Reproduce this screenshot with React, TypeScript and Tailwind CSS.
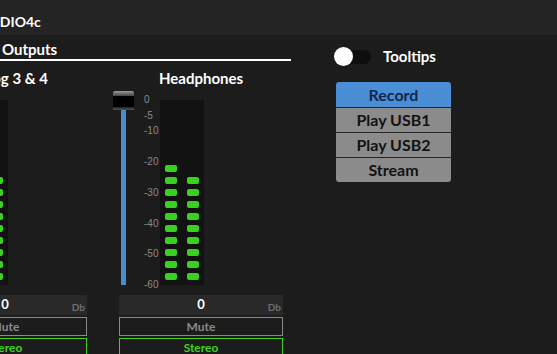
import React from "react";

const font = { fontFamily: "Lato, 'Open Sans', sans-serif" };

const scaleMarks = [
  { label: "0", top: 3 },
  { label: "-5", top: 19 },
  { label: "-10", top: 34 },
  { label: "-20", top: 65 },
  { label: "-30", top: 96 },
  { label: "-40", top: 127 },
  { label: "-50", top: 157 },
  { label: "-60", top: 188 },
];

function MeterColumn({ lit }: { lit: number }) {
  return (
    <div className="flex flex-col justify-end gap-[5px] w-[12px]">
      {Array.from({ length: lit }).map((_, i) => (
        <div key={i} className="h-[7px] w-[12px] rounded-[2px] bg-[#38d11f]" />
      ))}
    </div>
  );
}

function ChannelStrip({ title, left, right }: { title: string; left: number; right: number }) {
  return (
    <div className="w-[170px] flex-shrink-0 flex flex-col">
      {/* Strip title */}
      <div className="ml-[6px] w-[164px] mt-[7px] h-[20px] leading-[20px] text-center text-white font-bold text-[15px] whitespace-nowrap">
        {title}
      </div>

      {/* Fader + scale + meter */}
      <div className="mt-[3px] h-[204px] flex">
        <div className="w-[21px] flex flex-col">
          <div className="h-[19px] w-[21px] rounded-t-[2px] flex flex-col overflow-hidden">
            <div className="h-[5px] bg-gradient-to-b from-[#9a9a9a] to-[#444]" />
            <div className="flex-1 bg-black" />
            <div className="h-[3px] bg-gradient-to-b from-[#222] to-[#555]" />
          </div>
          <div className="ml-[8px] w-[5px] h-[175px] bg-[#4a8cce]" />
        </div>
        <div className="relative w-[26px]">
          {scaleMarks.map((m) => (
            <span
              key={m.label}
              className="absolute left-[10px] text-[10px] leading-[12px] text-[#8a8a8a]"
              style={{ top: m.top, fontFamily: "'Liberation Sans', Arial, sans-serif" }}
            >
              {m.label}
            </span>
          ))}
        </div>
        <div className="mt-[9px] h-[185px] w-[44px] bg-[#121212] flex justify-between px-[5px] pb-[5px]">
          <MeterColumn lit={left} />
          <MeterColumn lit={right} />
        </div>
      </div>

      {/* Controls */}
      <div className="ml-[6px] w-[164px]">
        <div className="relative h-[20px] bg-[#292929] flex items-center justify-center">
          <span className="text-white font-bold text-[13px]">0</span>
          <span className="absolute right-[2px] top-[5px] text-[10px] font-bold text-[#6f6f6f]">Db</span>
        </div>
        <div className="mt-[2px] h-[19px] border border-[#8a8a8a] flex items-center justify-center text-[12px] font-bold text-[#8a8a8a]">
          Mute
        </div>
        <div className="mt-[2px] h-[19px] border border-[#3fd21f] flex items-center justify-center text-[12px] font-bold text-[#3fd21f]">
          Stereo
        </div>
      </div>
    </div>
  );
}

export default function App() {
  const routes = ["Record", "Play USB1", "Play USB2", "Stream"];

  return (
    <div className="w-[557px] h-[354px] overflow-hidden bg-[#1c1c1c] flex flex-col" style={font}>
      {/* Title bar */}
      <div className="h-[35px] flex-shrink-0 bg-[#242424] flex items-center">
        <span className="ml-[-20px] pt-[8px] text-[14px] font-bold text-white whitespace-nowrap">AUDIO4c</span>
      </div>

      <div className="flex flex-1">
        {/* Outputs section */}
        <div className="w-[291px] flex-shrink-0 flex flex-col">
          <div className="mt-[4px] h-[22px] border-b-2 border-white">
            <div className="ml-[2px] h-[20px] leading-[20px] text-white font-bold text-[15px] whitespace-nowrap">
              Outputs
            </div>
          </div>
          <div className="ml-[-83px] flex gap-[26px]">
            <ChannelStrip title="Analog 3 & 4" left={10} right={9} />
            <ChannelStrip title="Headphones" left={10} right={9} />
          </div>
        </div>

        {/* Right panel */}
        <div className="pl-[43px] pt-[12px] flex flex-col">
          <div className="flex items-center h-[19px]">
            <div className="relative w-[37px] h-[19px] flex items-center">
              <div className="ml-[2px] w-[35px] h-[14px] rounded-full bg-[#0e0e0e]" />
              <div className="absolute left-0 top-0 w-[19px] h-[19px] rounded-full bg-white" />
            </div>
            <span className="ml-[12px] text-white font-bold text-[15px]">Tooltips</span>
          </div>
          <div className="mt-[16px] ml-[2px] w-[115px] rounded-[3px] overflow-hidden flex flex-col">
            {routes.map((r, i) => (
              <div
                key={r}
                className={
                  i === 0
                    ? "h-[25px] bg-[#4a8fd6] text-[#13264a] flex items-center justify-center font-bold text-[16px]"
                    : "h-[25px] border-t border-[#262626] bg-[#8b8b8b] text-[#121212] flex items-center justify-center font-bold text-[16px]"
                }
              >
                {r}
              </div>
            ))}
          </div>
        </div>
      </div>
    </div>
  );
}
